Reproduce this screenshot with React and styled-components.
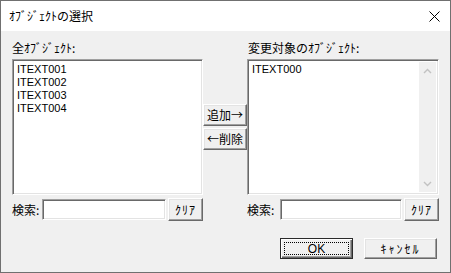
import React from 'react'
import styled, { createGlobalStyle } from 'styled-components'

const GlobalStyle = createGlobalStyle`
  html, body {
    margin: 0;
    padding: 0;
    background: #ffffff;
  }
  body {
    font-family: "Liberation Sans", "Noto Sans CJK JP", sans-serif;
  }
`

const jp = `"Noto Sans CJK JP", sans-serif`

const Window = styled.div`
  width: 451px;
  height: 273px;
  box-sizing: border-box;
  border: 1px solid #707070;
  background: #f0f0f0;
  display: flex;
  flex-direction: column;
  font-size: 12px;
  color: #000;
`

const TitleBar = styled.div`
  height: 30px;
  flex: none;
  background: #ffffff;
  display: flex;
  align-items: center;
  justify-content: space-between;
  padding: 0 10px 0 8px;
`

const Title = styled.span`
  font-family: ${jp};
  font-size: 12px;
  line-height: 14px;
`

const Body = styled.div`
  flex: 1;
  padding: 10px 11px 0 11px;
  display: flex;
  flex-direction: column;
`

const Columns = styled.div`
  display: grid;
  grid-template-columns: 191px 44px 192px;
  grid-template-rows: 18px 136px auto;
`

const Label = styled.div`
  font-family: ${jp};
  font-size: 12px;
  line-height: 14px;
  padding-left: ${p => p.$indent || 0}px;
  grid-column: ${p => p.$col};
`

const sunken = `
  box-sizing: border-box;
  background: #ffffff;
  border: 1px solid;
  border-color: #a0a0a0 #ffffff #ffffff #a0a0a0;
  box-shadow: inset 1px 1px 0 #696969, inset -1px -1px 0 #e3e3e3;
`

const ListBox = styled.div`
  ${sunken}
  grid-column: ${p => p.$col};
  grid-row: 2;
  display: flex;
  padding: 2px;
`

const Items = styled.div`
  flex: 1;
  padding: 1px 2px;
`

const Item = styled.div`
  font-family: "Liberation Sans", sans-serif;
  font-size: 11px;
  line-height: 13px;
  height: 13px;
`

const ScrollBar = styled.div`
  width: 17px;
  background: #f0f0f0;
  display: flex;
  flex-direction: column;
  justify-content: space-between;
`

const ScrollArrow = styled.div`
  height: 17px;
  display: flex;
  align-items: center;
  justify-content: center;
`

const Middle = styled.div`
  grid-column: 2;
  grid-row: 2;
  display: flex;
  flex-direction: column;
  justify-content: center;
  gap: 2px;
`

const Button = styled.button`
  box-sizing: border-box;
  position: relative;
  width: ${p => p.$w}px;
  height: ${p => p.$h || 22}px;
  padding: 0;
  background: #f0f0f0;
  border: 1px solid;
  border-color: #ffffff #696969 #696969 #ffffff;
  box-shadow: inset -1px -1px 0 #a0a0a0, inset 1px 1px 0 #e3e3e3;
  font-family: ${jp};
  font-size: 12px;
  line-height: 14px;
  color: #000;
  letter-spacing: ${p => p.$ls || 0}px;
`

const DefaultButton = styled(Button)`
  border-color: #2b2b2b;
  box-shadow: inset 1px 1px 0 #ffffff, inset -1px -1px 0 #696969, inset -2px -2px 0 #a0a0a0;
  font-family: "Liberation Sans", sans-serif;

  &::after {
    content: '';
    position: absolute;
    inset: 3px;
    border: 1px dotted #000;
  }
`

const SearchRow = styled.div`
  grid-column: ${p => p.$col};
  grid-row: 3;
  margin-top: 3px;
  display: flex;
  align-items: center;
  gap: 2px;
`

const SearchLabel = styled.span`
  width: ${p => p.$w}px;
  flex: none;
  font-family: ${jp};
  font-size: 12px;
  line-height: 14px;
`

const SearchInput = styled.input`
  ${sunken}
  flex: 1;
  min-width: 0;
  height: 21px;
  margin: 0;
  outline: none;
`

const Footer = styled.div`
  display: flex;
  justify-content: flex-end;
  gap: 11px;
  margin-top: 17px;
  padding-right: 2px;
`

function Chevron({ down }) {
  return (
    <svg width="9" height="6" viewBox="0 0 9 6">
      <path
        d={down ? 'M1 1 L4.5 4.5 L8 1' : 'M1 5 L4.5 1.5 L8 5'}
        fill="none"
        stroke="#c2c2c2"
        strokeWidth="1.4"
      />
    </svg>
  )
}

function Search({ col, labelWidth }) {
  return (
    <SearchRow $col={col}>
      <SearchLabel $w={labelWidth}>検索:</SearchLabel>
      <SearchInput type="text" />
      <Button $w={35} $h={23} $ls={1}>ｸﾘｱ</Button>
    </SearchRow>
  )
}

export default function App() {
  const all = ['ITEXT001', 'ITEXT002', 'ITEXT003', 'ITEXT004']
  const targets = ['ITEXT000']

  return (
    <Window>
      <GlobalStyle />
      <TitleBar>
        <Title>ｵﾌﾞｼﾞｪｸﾄの選択</Title>
        <svg width="11" height="11" viewBox="0 0 11 11">
          <path d="M0.5 0.5 L10.5 10.5 M10.5 0.5 L0.5 10.5" stroke="#000" strokeWidth="1" />
        </svg>
      </TitleBar>
      <Body>
        <Columns>
          <Label $col={1}>全ｵﾌﾞｼﾞｪｸﾄ:</Label>
          <Label $col={3} $indent={1}>変更対象のｵﾌﾞｼﾞｪｸﾄ:</Label>

          <ListBox $col={1}>
            <Items>
              {all.map(t => <Item key={t}>{t}</Item>)}
            </Items>
          </ListBox>

          <Middle>
            <Button $w={44}>追加→</Button>
            <Button $w={44}>←削除</Button>
          </Middle>

          <ListBox $col={3}>
            <Items>
              {targets.map(t => <Item key={t}>{t}</Item>)}
            </Items>
            <ScrollBar>
              <ScrollArrow><Chevron /></ScrollArrow>
              <ScrollArrow><Chevron down /></ScrollArrow>
            </ScrollBar>
          </ListBox>

          <Search col={1} labelWidth={28} />
          <Search col={3} labelWidth={31} />
        </Columns>

        <Footer>
          <DefaultButton $w={73} $h={21}>OK</DefaultButton>
          <Button $w={73} $h={21} $ls={2}>ｷｬﾝｾﾙ</Button>
        </Footer>
      </Body>
    </Window>
  )
}
